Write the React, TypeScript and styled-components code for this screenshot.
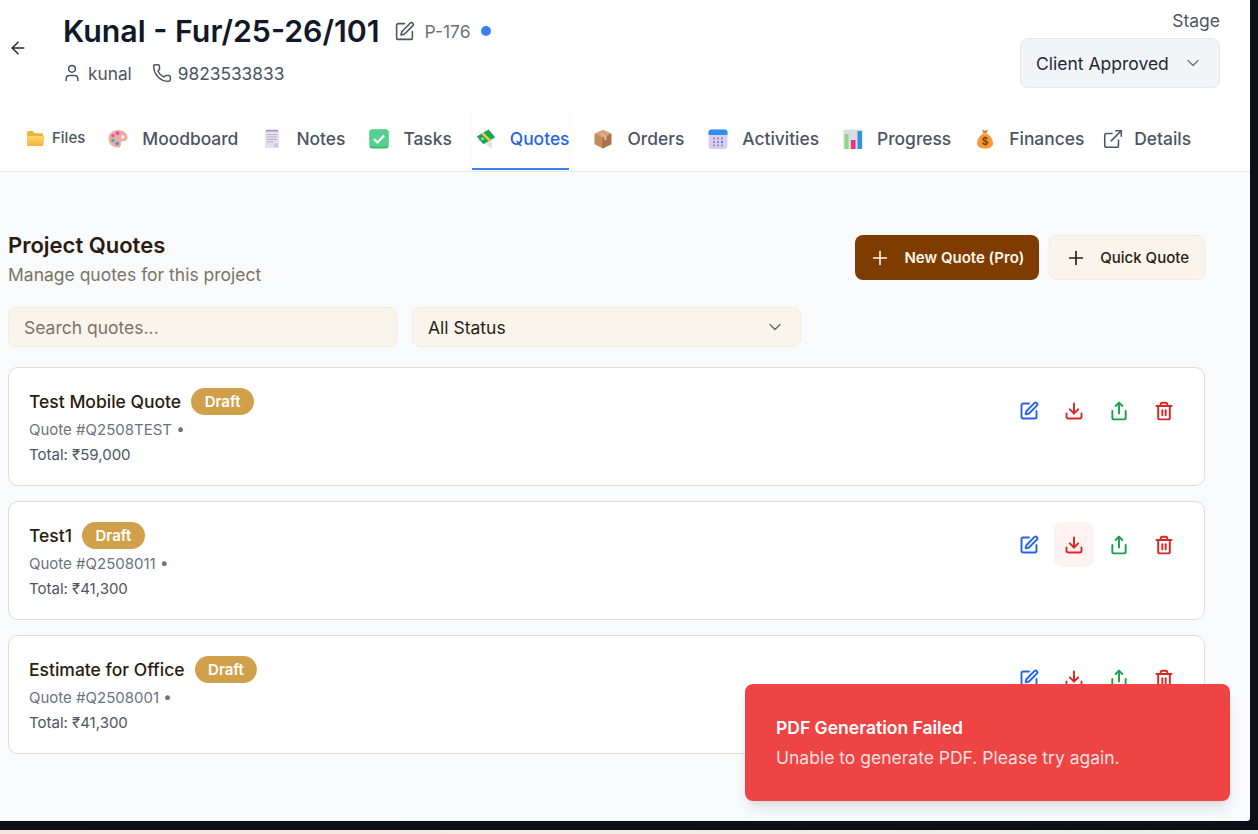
import React from "react";
import styled, {createGlobalStyle} from "styled-components";
import {ArrowLeft, ChevronDown, Download, ExternalLink, Phone, Plus, Share, SquarePen, Trash2, User} from "lucide-react";

const GlobalStyle = createGlobalStyle`
  html, body {
    margin: 0;
    padding: 0;
    background: #0e0f17;
  }
  * {
    box-sizing: border-box;
  }
  body {
    font-family: Inter, "Liberation Sans", sans-serif;
  }
`

const FolderEmoji = () => (
    <svg width="20" height="20" viewBox="0 0 20 20">
        <defs>
            <linearGradient id="folderFront" x1="0" y1="0" x2="0" y2="1">
                <stop offset="0" stopColor="#ffd86b"/>
                <stop offset="1" stopColor="#fbb03b"/>
            </linearGradient>
        </defs>
        <path d="M1 4.500A1.500 1.500 0 0 1 2.500 3h4l2 2.200h7a1.500 1.500 0 0 1 1.500 1.500V9H1z" fill="#f2ae3d"/>
        <path d="M2.500 8h15.300a.7.7 0 0 1 .7.800l-1.300 8.500a1 1 0 0 1-1 .7H2a1 1 0 0 1-1-1V9.500A1.500 1.500 0 0 1 2.500 8z" fill="url(#folderFront)"/>
    </svg>
)

const PaletteEmoji = () => (
    <svg width="20" height="20" viewBox="0 0 20 20">
        <path d="M10 1c5.200 0 9.500 3.400 9.500 7.600 0 3-2.500 3.900-4.600 3.600-1.700-.2-2.600.6-2.100 2 .6 1.800-.4 4.300-3.300 4.300C4.500 18.500.5 14.800.5 9.800S4.700 1 10 1z" fill="#f2a9a0"/>
        <circle cx="14.800" cy="8" r="1.700" fill="#fff"/>
        <circle cx="9.600" cy="4.300" r="1.800" fill="#b44fe8"/>
        <circle cx="5" cy="6.600" r="1.700" fill="#ef4d9a"/>
        <circle cx="5" cy="11.500" r="1.700" fill="#35b8a8"/>
        <circle cx="9.300" cy="14.600" r="1.800" fill="#4a8fe0"/>
    </svg>
)

const NotesEmoji = () => (
    <svg width="20" height="20" viewBox="0 0 20 20">
        <path d="M3 1.500h14v17.500H3z" fill="#e6deef"/>
        <path d="M4 .8h12v1.700H4z" fill="#9c94a8"/>
        <path d="M5 5h10v1H5zM5 7.500h10v1H5zM5 10h10v1H5zM5 12.500h6v1H5z" fill="#b9b1c6"/>
        <path d="M12 14.500h4V18h-4z" fill="#cfc5dc"/>
    </svg>
)

const CheckEmoji = () => (
    <svg width="20" height="20" viewBox="0 0 20 20">
        <rect x="0.500" y="0.500" width="19" height="19" rx="2.500" fill="#3fb878"/>
        <rect x="0.500" y="0.500" width="19" height="17" rx="2.500" fill="#55d18f"/>
        <path d="M5 10l3.500 3.500 6.500-7" fill="none" stroke="#fff" strokeWidth="2.200"/>
    </svg>
)

const MoneyEmoji = () => (
    <svg width="20" height="20" viewBox="0 0 20 20">
        <path d="M3 9.500L1 12l7 1.500L15.500 20l1-6-6-4z" fill="#dfe3e6"/>
        <path d="M.8 7.500L12.500.6l6.700 7.700-11.800 7z" fill="#16a655"/>
        <path d="M5.300 4.800l2.300-1.400 8 8.200-2.400 1.500z" fill="#f5c33b"/>
        <circle cx="6.500" cy="9.800" r="1.600" fill="#7fdca4"/>
    </svg>
)

const PackageEmoji = () => (
    <svg width="20" height="20" viewBox="0 0 20 20">
        <path d="M10 1l8.500 3.800v10.400L10 19.500z" fill="#a9744a"/>
        <path d="M10 1L1.500 4.800v10.400l8.500 4.300z" fill="#c08b5f"/>
        <path d="M1.500 4.800L10 8.800l8.500-4L10 1z" fill="#d3a27a"/>
        <path d="M10 8.800v10.700" stroke="#8f5f3b" strokeWidth=".6"/>
        <path d="M5 3.200l8.500 4v3.500l-2 1V8z" fill="#e2bb97"/>
    </svg>
)

const CalendarEmoji = () => (
    <svg width="20" height="20" viewBox="0 0 20 20">
        <rect x="0.500" y="0.500" width="19" height="19.500" rx="3" fill="#dccdf0"/>
        <path d="M.5 6V3.500a3 3 0 0 1 3-3h13a3 3 0 0 1 3 3V6z" fill="#2f8ff0"/>
        <path d="M5 8.500h2v2H5zM9 8.500h2v2H9zM13 8.500h2v2h-2zM5 12h2v2H5zM9 12h2v2H9zM5 15.500h2v2H5zM9 15.500h2v2H9zM13 15.500h2v2h-2z" fill="#9d90b5"/>
        <path d="M13 12h2v2h-2z" fill="#2f8ff0"/>
    </svg>
)

const ChartEmoji = () => (
    <svg width="20" height="20" viewBox="0 0 20 20">
        <rect x="0.500" y="0.500" width="19" height="19.500" rx="1.500" fill="#dcdbe2"/>
        <path d="M1.500 5h4v15h-4z" fill="#86dc7c"/>
        <path d="M8 11h4.500v9H8z" fill="#e8347c"/>
        <path d="M14.500 2h4.500v18h-4.500z" fill="#2f93e8"/>
    </svg>
)

const MoneyBagEmoji = () => (
    <svg width="20" height="20" viewBox="0 0 20 20">
        <path d="M7 .8l3 1 3-1-1.500 3.700h-3z" fill="#d9822b"/>
        <path d="M8 4.500h4c3.500 2.500 6 6 6 9.500 0 3.700-3 5.500-8 5.500S2 17.700 2 14c0-3.500 2.500-7 6-9.500z" fill="#f59a35"/>
        <path d="M7.800 4.200h4.400v1H7.800z" fill="#f7c84f"/>
        <text x="10" y="16" textAnchor="middle" fontSize="10" fontWeight="700" fill="#7a3b0a" fontFamily="Inter, sans-serif">$</text>
    </svg>
)

const tabs = [
    {title: "Moodboard", icon: <PaletteEmoji/>},
    {title: "Notes", icon: <NotesEmoji/>},
    {title: "Tasks", icon: <CheckEmoji/>},
    {title: "Quotes", icon: <MoneyEmoji/>, active: true},
    {title: "Orders", icon: <PackageEmoji/>},
    {title: "Activities", icon: <CalendarEmoji/>},
    {title: "Progress", icon: <ChartEmoji/>},
    {title: "Finances", icon: <MoneyBagEmoji/>},
]

const quotes = [
    {id: "1", title: "Test Mobile Quote", number: "Q2508TEST", total: "59,000"},
    {id: "2", title: "Test1", number: "Q2508011", total: "41,300", hovered: true},
    {id: "3", title: "Estimate for Office", number: "Q2508001", total: "41,300"},
]

export default function App() {
    return (
        <Screen>
            <GlobalStyle/>
            <AppWindow>
                <Header>
                    <HeaderTop>
                        <BackButton><ArrowLeft size={20} strokeWidth={1.8}/></BackButton>
                        <ProjectInfo>
                            <TitleRow>
                                <ProjectTitle>Kunal - Fur/25-26/101</ProjectTitle>
                                <EditIcon><SquarePen size={21} strokeWidth={1.8}/></EditIcon>
                                <ProjectCode>P-176</ProjectCode>
                                <StatusDot/>
                            </TitleRow>
                            <MetaRow>
                                <MetaItem><User size={20} strokeWidth={1.8}/>kunal</MetaItem>
                                <MetaItem><Phone size={20} strokeWidth={1.8}/>9823533833</MetaItem>
                            </MetaRow>
                        </ProjectInfo>
                        <StageBlock>
                            <StageLabel>Stage</StageLabel>
                            <StageSelect>
                                Client Approved
                                <ChevronDown size={20} strokeWidth={1.5} color="#6b7280"/>
                            </StageSelect>
                        </StageBlock>
                    </HeaderTop>
                    <TabBar>
                        <FilesTab><FolderEmoji/>Files</FilesTab>
                        {tabs.map(t => (
                            <Tab key={t.title} $active={t.active}>{t.icon}{t.title}</Tab>
                        ))}
                        <DetailsTab><ExternalLink size={22} strokeWidth={1.7}/>Details</DetailsTab>
                    </TabBar>
                </Header>
                <Content>
                    <SectionHead>
                        <div>
                            <SectionTitle>Project Quotes</SectionTitle>
                            <SectionSub>Manage quotes for this project</SectionSub>
                        </div>
                        <HeadActions>
                            <PrimaryButton><Plus size={22} strokeWidth={1.8}/>New Quote (Pro)</PrimaryButton>
                            <SecondaryButton><Plus size={22} strokeWidth={1.8}/>Quick Quote</SecondaryButton>
                        </HeadActions>
                    </SectionHead>
                    <Filters>
                        <SearchInput placeholder="Search quotes..."/>
                        <StatusSelect>
                            All Status
                            <ChevronDown size={20} strokeWidth={1.5} color="#6b6455"/>
                        </StatusSelect>
                    </Filters>
                    <QuoteList>
                        {quotes.map(q => (
                            <QuoteCard key={q.id}>
                                <div>
                                    <QuoteTitleRow>
                                        <QuoteTitle>{q.title}</QuoteTitle>
                                        <DraftBadge>Draft</DraftBadge>
                                    </QuoteTitleRow>
                                    <QuoteNumber>Quote #{q.number} •</QuoteNumber>
                                    <QuoteTotal>Total: ₹{q.total}</QuoteTotal>
                                </div>
                                <CardActions>
                                    <ActionButton $color="#2563eb"><SquarePen size={20} strokeWidth={2.3}/></ActionButton>
                                    <ActionButton $color="#dc2626" $hovered={q.hovered}><Download size={20} strokeWidth={2.3}/></ActionButton>
                                    <ActionButton $color="#16a34a"><Share size={20} strokeWidth={2.3}/></ActionButton>
                                    <ActionButton $color="#dc2626"><Trash2 size={20} strokeWidth={2.3}/></ActionButton>
                                </CardActions>
                            </QuoteCard>
                        ))}
                    </QuoteList>
                </Content>
                <Toast>
                    <ToastTitle>PDF Generation Failed</ToastTitle>
                    <ToastText>Unable to generate PDF. Please try again.</ToastText>
                </Toast>
            </AppWindow>
            <DesktopStrip/>
        </Screen>
    )
}

const Screen = styled.div`
  width: 1258px;
  height: 834px;
  overflow: hidden;
  background: #0e0f17;
`

const AppWindow = styled.div`
  position: relative;
  width: 1250px;
  height: 821px;
  overflow: hidden;
  background: #f9fafb;
  border-bottom-right-radius: 3px;
`

const DesktopStrip = styled.div`
  height: 4px;
  margin-top: 9px;
  background: linear-gradient(90deg, #f6e5dc, #f5ebe3 60%, #e6f0ea);
`

const Header = styled.header`
  height: 172px;
  background: #fff;
  border-bottom: 1px solid #e5e7eb;
`

const HeaderTop = styled.div`
  display: flex;
  align-items: flex-start;
  height: 108px;
  padding: 13px 30px 0 8px;
`

const BackButton = styled.div`
  display: flex;
  align-items: center;
  height: 70px;
  width: 55px;
  color: #1f2937;
`

const ProjectInfo = styled.div`
  flex: 1;
`

const TitleRow = styled.div`
  display: flex;
  align-items: center;
  height: 36px;
`

const ProjectTitle = styled.h1`
  margin: 0;
  font-size: 30.300px;
  line-height: 36px;
  font-weight: 600;
  color: #111827;
`

const EditIcon = styled.span`
  display: flex;
  margin-left: 14px;
  color: #4b5563;
`

const ProjectCode = styled.span`
  margin-left: 10px;
  font-size: 17.500px;
  color: #6b7280;
`

const StatusDot = styled.span`
  width: 10px;
  height: 10px;
  margin-left: 10px;
  border-radius: 50%;
  background: #3b82f6;
`

const MetaRow = styled.div`
  display: flex;
  gap: 20px;
  margin: 14px 0 0 -1px;
`

const MetaItem = styled.div`
  display: flex;
  align-items: center;
  gap: 6px;
  height: 20px;
  font-size: 17.300px;
  color: #4b5563;
`

const StageBlock = styled.div`
  display: flex;
  flex-direction: column;
  align-items: flex-end;
  margin-top: -2px;
`

const StageLabel = styled.div`
  height: 20px;
  font-size: 17.500px;
  line-height: 20px;
  color: #4b5563;
`

const StageSelect = styled.div`
  display: flex;
  align-items: center;
  justify-content: space-between;
  width: 200px;
  height: 50px;
  margin-top: 7px;
  padding: 0 16px 0 15px;
  background: #f3f4f6;
  border: 1px solid #e5e7eb;
  border-radius: 8px;
  font-size: 17.500px;
  color: #1f2937;
`

const TabBar = styled.nav`
  display: flex;
  gap: 20px;
  height: 62px;
  padding-left: 22px;
`

const Tab = styled.div<{ $active?: boolean }>`
  display: flex;
  align-items: center;
  gap: 14px;
  padding: 1px 0 0 4px;
  font-size: 17.400px;
  font-weight: 500;
  color: ${props => props.$active ? "#2563eb" : "#4b5563"};
  border-bottom: 2px solid ${props => props.$active ? "#3b82f6" : "transparent"};
  box-shadow: ${props => props.$active ? "-1px 0 0 #f9fafb, 1px 0 0 #f9fafb" : "none"};
`

const FilesTab = styled(Tab)`
  gap: 6px;
  margin-right: -1px;
  font-size: 15px;
  padding-bottom: 2px;
`

const DetailsTab = styled(Tab)`
  gap: 10px;
  margin-left: -2px;
  padding-left: 0;
`

const Content = styled.main`
  width: 1205px;
  padding: 58px 0 0 8px;
`

const SectionHead = styled.div`
  display: flex;
  justify-content: space-between;
  align-items: flex-start;
  margin-bottom: 19px;
`

const SectionTitle = styled.h2`
  margin: 0 0 2px;
  font-size: 22px;
  line-height: 30px;
  font-weight: 600;
  color: #2a1c10;
`

const SectionSub = styled.p`
  margin: 0;
  font-size: 17.500px;
  line-height: 26px;
  color: #7c7365;
`

const HeadActions = styled.div`
  display: flex;
  gap: 10px;
  margin-top: 5px;
`

const PrimaryButton = styled.button`
  display: flex;
  align-items: center;
  gap: 13px;
  height: 45px;
  padding: 0 15px 0 14px;
  background: #7f3c00;
  border: none;
  border-radius: 8px;
  font-family: inherit;
  font-size: 15px;
  font-weight: 600;
  color: #fdf6ec;
`

const SecondaryButton = styled(PrimaryButton)`
  padding-left: 15px;
  background: #f9f4ec;
  border: 1px solid #f3ecdf;
  font-weight: 500;
  color: #2a1c10;
`

const Filters = styled.div`
  display: flex;
  gap: 15px;
  margin-bottom: 20px;
`

const SearchInput = styled.input`
  width: 389px;
  height: 40px;
  padding: 0 15px;
  background: #f9f4ec;
  border: 1px solid #f3ecdf;
  border-radius: 8px;
  outline: none;
  font-family: inherit;
  font-size: 17.500px;
  color: #2a1c10;

  &::placeholder {
    color: #7c7365;
  }
`

const StatusSelect = styled.div`
  display: flex;
  align-items: center;
  justify-content: space-between;
  width: 389px;
  height: 40px;
  padding: 0 15px 0 15px;
  background: #f9f4ec;
  border: 1px solid #f3ecdf;
  border-radius: 8px;
  font-size: 17.500px;
  color: #2a1c10;
`

const QuoteList = styled.div`
  display: flex;
  flex-direction: column;
  gap: 15px;
`

const QuoteCard = styled.article`
  display: flex;
  justify-content: space-between;
  align-items: flex-start;
  height: 119px;
  padding: 20px 20px 0;
  background: #fff;
  border: 1px solid #e3ddd0;
  border-radius: 10px;
`

const QuoteTitleRow = styled.div`
  display: flex;
  align-items: center;
  gap: 10px;
  height: 27px;
`

const QuoteTitle = styled.h3`
  margin: 0;
  font-size: 17.500px;
  font-weight: 500;
  color: #2a1c10;
`

const DraftBadge = styled.span`
  display: flex;
  align-items: center;
  height: 27px;
  padding: 0 13.500px;
  background: #d1a04a;
  border-radius: 999px;
  font-size: 15px;
  font-weight: 600;
  color: #fff;
`

const QuoteNumber = styled.div`
  margin-top: 5px;
  font-size: 15px;
  line-height: 20px;
  color: #6b7280;
`

const QuoteTotal = styled.div`
  margin-top: 5px;
  font-size: 15px;
  line-height: 20px;
  color: #4b5563;
`

const CardActions = styled.div`
  display: flex;
  gap: 5px;
`

const ActionButton = styled.div<{ $color: string, $hovered?: boolean }>`
  display: flex;
  align-items: center;
  justify-content: center;
  width: 40px;
  height: 45px;
  border-radius: 8px;
  color: ${props => props.$color};
  background: ${props => props.$hovered ? "#fef2f2" : "transparent"};
`

const Toast = styled.div`
  position: absolute;
  left: 745px;
  top: 684px;
  width: 485px;
  height: 117px;
  padding: 32px 31px 0;
  background: #ef4444;
  border-radius: 8px;
  box-shadow: 0 10px 15px -3px rgba(0, 0, 0, 0.1), 0 4px 6px -4px rgba(0, 0, 0, 0.1);
`

const ToastTitle = styled.div`
  font-size: 17.500px;
  line-height: 24px;
  font-weight: 600;
  color: #fff;
`

const ToastText = styled.div`
  margin-top: 6px;
  font-size: 17.500px;
  line-height: 24px;
  color: rgba(255, 255, 255, 0.85);
`
